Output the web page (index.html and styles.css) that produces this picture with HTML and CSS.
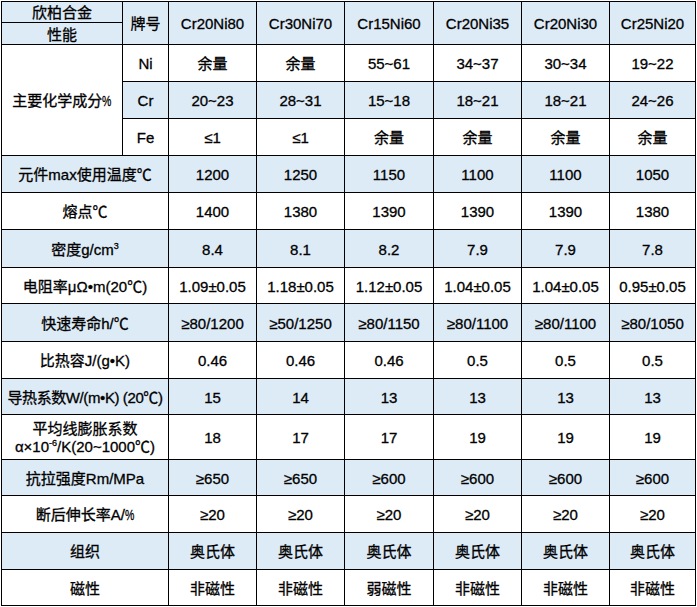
FILE: index.html
```html
<!DOCTYPE html>
<html lang="zh">
<head>
<meta charset="utf-8">
<title>欣柏合金 性能</title>
<link rel="stylesheet" href="styles.css">
</head>
<body>
<table class="spec">
  <colgroup>
    <col class="c-label"><col class="c-sub"><col class="c-a"><col class="c-a"><col class="c-b"><col class="c-a"><col class="c-a"><col class="c-c">
  </colgroup>
  <tr class="head hA">
    <td class="split-top">欣柏合金</td>
    <td rowspan="2">牌号</td>
    <td rowspan="2">Cr20Ni80</td>
    <td rowspan="2">Cr30Ni70</td>
    <td rowspan="2">Cr15Ni60</td>
    <td rowspan="2">Cr20Ni35</td>
    <td rowspan="2">Cr20Ni30</td>
    <td rowspan="2">Cr25Ni20</td>
  </tr>
  <tr class="head hB">
    <td class="split-bot">性能</td>
  </tr>
  <tr class="r37">
    <td rowspan="3" class="white">主要化学成分<span class="pct">%</span></td>
    <td>Ni</td><td>余量</td><td>余量</td><td>55~61</td><td>34~37</td><td>30~34</td><td>19~22</td>
  </tr>
  <tr class="r37 blue">
    <td>Cr</td><td>20~23</td><td>28~31</td><td>15~18</td><td>18~21</td><td>18~21</td><td>24~26</td>
  </tr>
  <tr class="r37">
    <td>Fe</td><td>≤1</td><td>≤1</td><td>余量</td><td>余量</td><td>余量</td><td>余量</td>
  </tr>
  <tr class="r37 blue">
    <td colspan="2">元件max使用温度℃</td><td>1200</td><td>1250</td><td>1150</td><td>1100</td><td>1100</td><td>1050</td>
  </tr>
  <tr class="r37">
    <td colspan="2">熔点℃</td><td>1400</td><td>1380</td><td>1390</td><td>1390</td><td>1390</td><td>1380</td>
  </tr>
  <tr class="r38 blue">
    <td colspan="2">密度g/cm<sup>3</sup></td><td>8.4</td><td>8.1</td><td>8.2</td><td>7.9</td><td>7.9</td><td>7.8</td>
  </tr>
  <tr class="r36">
    <td colspan="2">电阻率μΩ•m(20℃)</td><td>1.09±0.05</td><td>1.18±0.05</td><td>1.12±0.05</td><td>1.04±0.05</td><td>1.04±0.05</td><td>0.95±0.05</td>
  </tr>
  <tr class="r38 blue">
    <td colspan="2">快速寿命h/℃</td><td>≥80/1200</td><td>≥50/1250</td><td>≥80/1150</td><td>≥80/1100</td><td>≥80/1100</td><td>≥80/1050</td>
  </tr>
  <tr class="r37">
    <td colspan="2">比热容J/(g•K)</td><td>0.46</td><td>0.46</td><td>0.46</td><td>0.5</td><td>0.5</td><td>0.5</td>
  </tr>
  <tr class="r36 blue">
    <td colspan="2" class="tight">导热系数W/(m•K) (20℃)</td><td>15</td><td>14</td><td>13</td><td>13</td><td>13</td><td>13</td>
  </tr>
  <tr class="r45">
    <td colspan="2" class="two">平均线膨胀系数<br>α×10<sup>-6</sup>/K(20~1000℃)</td><td>18</td><td>17</td><td>17</td><td>19</td><td>19</td><td>19</td>
  </tr>
  <tr class="r36 blue">
    <td colspan="2">抗拉强度Rm/MPa</td><td>≥650</td><td>≥650</td><td>≥600</td><td>≥600</td><td>≥600</td><td>≥600</td>
  </tr>
  <tr class="r37">
    <td colspan="2">断后伸长率A/<span class="pct">%</span></td><td>≥20</td><td>≥20</td><td>≥20</td><td>≥20</td><td>≥20</td><td>≥20</td>
  </tr>
  <tr class="r37 blue">
    <td colspan="2">组织</td><td>奥氏体</td><td>奥氏体</td><td>奥氏体</td><td>奥氏体</td><td>奥氏体</td><td>奥氏体</td>
  </tr>
  <tr class="r36">
    <td colspan="2">磁性</td><td>非磁性</td><td>非磁性</td><td>弱磁性</td><td>非磁性</td><td>非磁性</td><td>非磁性</td>
  </tr>
</table>
</body>
</html>
```
FILE: styles.css
```css
html, body {
  margin: 0;
  padding: 0;
  background: #ffffff;
}

body {
  padding: 1px 0 0 1px;
}

.spec {
  border-collapse: collapse;
  table-layout: fixed;
  width: 695px;
  font-family: "Liberation Sans", "Noto Sans CJK SC", sans-serif;
  font-size: 15px;
  font-weight: 400;
  color: #000;
  -webkit-text-stroke: 0.3px #000;
}

.c-label { width: 121px; }
.c-sub { width: 46px; }
.c-a { width: 88px; }
.c-b { width: 89px; }
.c-c { width: 86px; }

.spec td {
  border: 1px solid #000;
  padding: 0;
  text-align: center;
  vertical-align: middle;
  white-space: nowrap;
  line-height: 18px;
  padding-top: 2px;
}

.head td { background: #ddebf7; }
.hA { height: 21px; }
.hB { height: 22px; }
.split-top { line-height: 20px; padding-top: 0; }
.split-bot { line-height: 20px; padding-top: 0; }

.blue td { background: #ddebf7; }
.white { background: #ffffff; }

.r36 { height: 36px; }
.r37 { height: 37px; }
.r38 { height: 38px; }
.r45 { height: 45px; }

.two { line-height: 21px; padding-top: 1px; }

.tight { letter-spacing: -0.4px; }

.pct {
  display: inline-block;
  transform: scaleX(0.7);
  margin: 0 -2px;
}

sup {
  font-size: 9px;
  line-height: 0;
  vertical-align: 6px;
}
```
